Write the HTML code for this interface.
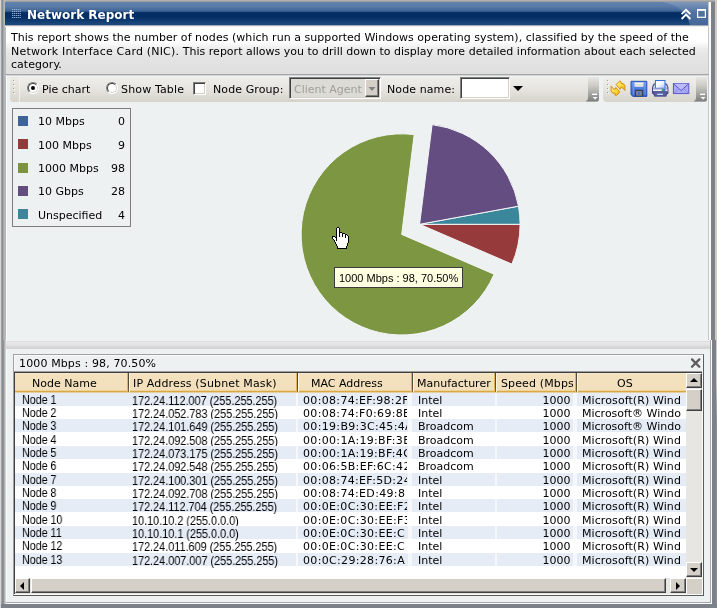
<!DOCTYPE html>
<html>
<head>
<meta charset="utf-8">
<title>Network Report</title>
<style>
html,body{margin:0;padding:0;}
body{width:717px;height:608px;overflow:hidden;position:relative;background:#eef1f2;font-family:"DejaVu Sans","Liberation Sans",sans-serif;font-size:11px;color:#000;}
.abs{position:absolute;}
.v,.a,#titletxt{will-change:transform;}
.v{font-family:"DejaVu Sans","Liberation Sans",sans-serif;font-size:11px;white-space:nowrap;line-height:13px;}
#d1,#d2,#d3{letter-spacing:0.04px;}
.a{font-family:"Liberation Sans",sans-serif;font-size:11px;white-space:nowrap;line-height:13px;}
/* window frame */
#fl0{left:0;top:0;width:1px;height:608px;background:#d6d6d6;}
#fl1{left:1px;top:0;width:3px;height:608px;background:linear-gradient(90deg,#9da0a5 0,#9da0a5 33.3%,#898e94 33.3%,#898e94 66.6%,#a6a8ab 66.6%);}
#fl2{left:4px;top:0;width:2px;height:608px;background:#b8b8b8;}
#fl3{left:6px;top:76px;width:1px;height:526px;background:#fbfbfb;}
#fl4{left:3px;top:340px;width:3px;height:268px;background:linear-gradient(90deg,#8e9398 0,#8e9398 33.3%,#b2b2b2 33.3%,#b2b2b2 66.6%,#cfcfcf 66.6%);}
#ft{left:0;top:0;width:717px;height:2px;background:linear-gradient(#b0b0b0 0,#b0b0b0 50%,#9c9c9c 50%);}
#fr0{left:708px;top:2px;width:1px;height:338px;background:#c6c6c6;}
#fr1{left:709px;top:2px;width:2px;height:338px;background:#fbfaf8;}
#fr2{left:711px;top:2px;width:4px;height:606px;background:#7d828a;}
#fr3{left:715px;top:0;width:2px;height:608px;background:linear-gradient(#cfccc5 0,#cfccc5 380px,#8d9197 420px);}
#fr4{left:710px;top:340px;width:6px;height:268px;background:linear-gradient(90deg,#a9a9a9 0,#a9a9a9 16.6%,#fcfcfc 16.6%,#fcfcfc 33.3%,#7d828a 33.3%);}
#fb0{left:6px;top:602px;width:705px;height:2px;background:linear-gradient(#a6a6a6 0,#a6a6a6 50%,#fcfcfc 50%);}
#fb1{left:1px;top:604px;width:716px;height:4px;background:#7d828a;}
/* title */
#title{left:5px;top:2px;width:703px;height:23px;background:linear-gradient(#6182ac 0%,#5b7ca8 18%,#3e6495 40%,#0a3468 45%,#012e63 50%,#052f65 66%,#1f4b7f 100%);}
#titletxt{left:27px;top:8px;color:#fff;font-weight:bold;font-size:12px;line-height:14px;white-space:nowrap;font-family:"DejaVu Sans","Liberation Sans",sans-serif;}
#desc{left:6px;top:26px;width:702px;height:48px;background:linear-gradient(#ffffff 0%,#fefefe 33%,#ececec 48%,#e5e5e5 60%,#dedede 100%);}
#descline{left:5px;top:74px;width:704px;height:2px;background:linear-gradient(#a6a6a6 0,#a6a6a6 50%,#d5d6d7 50%,#d5d6d7 100%);}
#descline2{left:5px;top:25px;width:704px;height:2px;background:linear-gradient(#a4acb6 0,#a4acb6 50%,#eceeef 50%);z-index:1;}
/* toolbar */
.tb{top:77px;height:25px;background:linear-gradient(#efeeea 0%,#e6e4df 50%,#d6d3cb 100%);border-radius:0 0 4px 4px;}
.ovf{top:77px;height:25px;background:linear-gradient(#e0dfda 0%,#c4c2bc 50%,#9a9a98 100%);border-radius:0 0 5px 0;}
.grip{width:1px;height:16px;top:80px;background:repeating-linear-gradient(#a19e97 0,#a19e97 1.5px,transparent 1.5px,transparent 4px);}
.grip:after{content:"";position:absolute;left:1px;top:1px;width:1px;height:16px;background:repeating-linear-gradient(#ffffff 0,#ffffff 1.5px,transparent 1.5px,transparent 4px);}
.gseg{top:77px;height:25px;width:9px;background:linear-gradient(#ebe9e4 0%,#e4e1db 50%,#d7d4cc 100%);border-radius:0 0 0 4px;box-shadow:1px 0 0 #f1f0ec;}
.radio{width:12px;height:12px;border-radius:50%;background:#fff;border:1px solid;border-color:#808080 #ffffff #ffffff #808080;box-sizing:border-box;transform:rotate(0deg);}
.radio:after{content:"";position:absolute;left:0;top:0;width:10px;height:10px;box-sizing:border-box;border-radius:50%;border:1px solid;border-color:#404040 #d4d0c8 #d4d0c8 #404040;}
.sunk{box-sizing:border-box;border:1px solid;border-color:#808080 #fff #fff #808080;box-shadow:inset 1px 1px 0 #404040, inset -1px -1px 0 #d4d0c8;}
/* legend */
#legend{left:12px;top:108px;width:119px;height:119px;box-sizing:border-box;border:1px solid #7d7d7d;}
.sw{left:18px;width:10px;height:10px;}
.ll{left:38px;}
.ln{left:90px;width:35px;text-align:right;}
/* splitter */
#split0{left:6px;top:341px;width:704px;height:1px;background:#dedede;}
#split1{left:6px;top:342px;width:704px;height:7px;background:linear-gradient(#e8e8e8 0%,#e2e2e2 45%,#d3d3d3 80%,#d6d6d6 100%);}
/* lower panel */
#lbox{left:13px;top:354px;width:691px;height:242px;box-sizing:border-box;border:1px solid;border-color:#a0a0a0 #5c5c5c #5c5c5c #a0a0a0;box-shadow:inset 1px 1px 0 #fafafa, inset -1px -1px 0 #fafafa;}
#tframe{left:14px;top:372px;width:688px;height:222px;background:#fff;border-top:1px solid #404040;border-left:1px solid #404040;box-sizing:border-box;box-shadow:0 -1px 0 #9c9c9c;}
#thead{left:15px;top:373px;width:671px;height:17px;background:linear-gradient(#f7e9cf 0,#f3e0bd 2px,#f2dfbb 100%);}
#theadline{left:15px;top:390px;width:671px;height:3px;background:linear-gradient(#ecd29c 0,#ecd29c 33.3%,#dba73f 33.3%,#dba73f 66.6%,#e6cf9e 66.6%);}
.sep{top:373px;width:1px;height:19px;background:linear-gradient(#4c463a,#5e4f33 75%,#8a6a30);box-shadow:1px 0 0 #fdf6e6,-1px 0 0 #dfb25c;}
.stripe{left:15px;width:671px;height:13px;background:#e6ecf6;}
.btn{box-sizing:border-box;background:#d4d0c8;border:1px solid;border-color:#fff #404040 #404040 #fff;box-shadow:inset -1px -1px 0 #808080;}
.track{background:#e8e6e1;}
</style>
</head>
<body>
<!-- frame -->
<div class="abs" id="ft"></div>
<div class="abs" id="fl0"></div><div class="abs" id="fl1"></div><div class="abs" id="fl2"></div><div class="abs" id="fl3"></div><div class="abs" id="fl4"></div>
<div class="abs" id="fr0"></div><div class="abs" id="fr1"></div><div class="abs" id="fr2"></div><div class="abs" id="fr3"></div><div class="abs" id="fr4"></div>
<div class="abs" id="fb0"></div><div class="abs" id="fb1"></div>

<!-- title bar -->
<div class="abs" id="title"></div>
<svg class="abs" style="left:12px;top:9px" width="9" height="9" viewBox="0 0 9 9"><g fill="#93abce"><rect x="0.00" y="0" width="1.25" height="1"/><rect x="1.90" y="0" width="1.25" height="1"/><rect x="3.80" y="0" width="1.25" height="1"/><rect x="5.70" y="0" width="1.25" height="1"/><rect x="7.60" y="0" width="1.25" height="1"/><rect x="0.00" y="2" width="1.25" height="1"/><rect x="1.90" y="2" width="1.25" height="1"/><rect x="3.80" y="2" width="1.25" height="1"/><rect x="5.70" y="2" width="1.25" height="1"/><rect x="7.60" y="2" width="1.25" height="1"/><rect x="0.00" y="4" width="1.25" height="1"/><rect x="1.90" y="4" width="1.25" height="1"/><rect x="3.80" y="4" width="1.25" height="1"/><rect x="5.70" y="4" width="1.25" height="1"/><rect x="7.60" y="4" width="1.25" height="1"/><rect x="0.00" y="6" width="1.25" height="1"/><rect x="1.90" y="6" width="1.25" height="1"/><rect x="3.80" y="6" width="1.25" height="1"/><rect x="5.70" y="6" width="1.25" height="1"/><rect x="7.60" y="6" width="1.25" height="1"/><rect x="0.00" y="8" width="1.25" height="1"/><rect x="1.90" y="8" width="1.25" height="1"/><rect x="3.80" y="8" width="1.25" height="1"/><rect x="5.70" y="8" width="1.25" height="1"/><rect x="7.60" y="8" width="1.25" height="1"/></g></svg>
<div class="abs" id="titletxt">Network Report</div>
<svg class="abs" style="left:655px;top:2px" width="53" height="23" viewBox="655 2 53 23">
 <defs><linearGradient id="gt" x1="0" y1="0" x2="0" y2="1"><stop offset="0" stop-color="#7f98bc"/><stop offset="0.45" stop-color="#52739f"/><stop offset="1" stop-color="#446799"/></linearGradient></defs>
 <path d="M662 2 C678 4 687 13 690 25 L708 25 L708 2 Z" fill="url(#gt)"/>
</svg>
<svg class="abs" style="left:679px;top:8px" width="29" height="14" viewBox="0 0 29 14">
 <path d="M2.6 6.2 L7 1.8 L11.4 6.2 M2.6 11 L7 6.6 L11.4 11" fill="none" stroke="#fff" stroke-width="1.9"/>
 <rect x="18.6" y="2" width="7.8" height="7.3" fill="none" stroke="#fff" stroke-width="1.2"/>
 <rect x="18" y="1" width="9" height="1.6" fill="#fff"/>
</svg>

<!-- description -->
<div class="abs" id="descline2"></div>
<div class="abs" id="desc"></div>
<div class="abs" id="descline"></div>
<div class="abs v" id="d1" style="left:11px;top:31px;">This report shows the number of nodes (which run a supported Windows operating system), classified by the speed of the</div>
<div class="abs v" id="d2" style="left:11px;top:45px;"><span id="d2a" style="letter-spacing:0.19px;">Network Interface Card (NIC). </span><span id="d2b" style="letter-spacing:0.005px;">This report allows you to drill down to display more detailed information about each selected</span></div>
<div class="abs v" id="d3" style="left:11px;top:58px;">category.</div>

<!-- toolbar 1 -->
<div class="abs tb" style="left:10px;width:589px;"></div>
<svg class="abs" style="left:0;top:0" width="0" height="0"><defs><linearGradient id="go" x1="0" y1="0" x2="0" y2="1"><stop offset="0" stop-color="#ebe9e5"/><stop offset="0.08" stop-color="#e2e0db"/><stop offset="0.35" stop-color="#cdcbc6"/><stop offset="0.65" stop-color="#a9a9a7"/><stop offset="1" stop-color="#7c7c7c"/></linearGradient></defs></svg>
<svg class="abs" style="left:585px;top:77px" width="15" height="25" viewBox="0 0 15 25">
 <path d="M3 0 L14 0 L14 22 Q14 24.6 11.5 24.6 L0.6 24.6 Q3 23.6 3 21 Z" fill="url(#go)"/>
 <rect x="7" y="16.6" width="5" height="1.4" fill="#fff"/>
 <path d="M7.6 20 L12.6 20 L10.1 22.8 Z" fill="#f4f4f4"/>
</svg>
<div class="abs gseg" style="left:10px;"></div><div class="abs grip" style="left:13px;"></div>
<div class="abs radio" style="left:27px;top:82px;"></div>
<div class="abs" style="left:31px;top:86px;width:4px;height:4px;border-radius:50%;background:#000;"></div>
<div class="abs v" id="t1" style="left:42px;top:83px;">Pie chart</div>
<div class="abs radio" style="left:106px;top:82px;"></div>
<div class="abs v" id="t2" style="left:120.5px;top:83px;letter-spacing:0.15px;">Show Table</div>
<div class="abs sunk" style="left:193px;top:82px;width:13px;height:13px;background:#fff;"></div>
<div class="abs v" id="t3" style="left:212.5px;top:83px;letter-spacing:0.1px;">Node Group:</div>
<div class="abs sunk" style="left:289px;top:77px;width:92px;height:22px;background:#dddbd5;"></div>
<div class="abs v" id="t4" style="left:294px;top:83px;color:#a09e98;">Client Agent</div>
<div class="abs btn" style="left:365px;top:79px;width:14px;height:18px;"></div>
<svg class="abs" style="left:368px;top:87px" width="8" height="4" viewBox="0 0 8 4"><path d="M0.5 0 L7.5 0 L4 4 Z" fill="#808080"/></svg>
<div class="abs v" id="t5" style="left:387px;top:83px;letter-spacing:0.1px;">Node name:</div>
<div class="abs sunk" style="left:460px;top:77px;width:50px;height:22px;background:#fff;"></div>
<svg class="abs" style="left:513px;top:86px" width="10" height="5" viewBox="0 0 10 5"><path d="M0 0 L10 0 L5 5 Z" fill="#000"/></svg>

<!-- toolbar 2 -->
<div class="abs tb" style="left:603px;width:104px;border-radius:4px 0 4px 4px;"></div>
<svg class="abs" style="left:693px;top:77px" width="15" height="25" viewBox="0 0 15 25">
 <path d="M3 0 L14 0 L14 22 Q14 24.6 11.5 24.6 L0.6 24.6 Q3 23.6 3 21 Z" fill="url(#go)"/>
 <rect x="7" y="16.6" width="5" height="1.4" fill="#fff"/>
 <path d="M7.6 20 L12.6 20 L10.1 22.8 Z" fill="#f4f4f4"/>
</svg>
<div class="abs grip" style="left:607px;"></div>
<svg class="abs" style="left:609px;top:79px" width="18" height="20" viewBox="609 79 18 20">
 <defs><linearGradient id="gy" x1="0" y1="0" x2="1" y2="1"><stop offset="0" stop-color="#fff6b0"/><stop offset="0.5" stop-color="#ffd83a"/><stop offset="1" stop-color="#e9ac12"/></linearGradient></defs>
 <path d="M616.1 84.7 L619.5 81.1 L620.9 81.4 L621.1 83.4 L623.3 83.5 L624.9 85.6 L624.9 90.5 L622.6 87.8 L620.8 87.4 L620.2 89.2 Z" fill="url(#gy)" stroke="#cf9410" stroke-width="1" stroke-linejoin="round"/>
 <path d="M619.9 91.9 L616.5 95.5 L615.1 95.2 L614.9 93.2 L612.7 93.1 L611.1 91.0 L611.1 86.1 L613.4 88.8 L615.2 89.2 L615.8 87.4 Z" fill="url(#gy)" stroke="#cf9410" stroke-width="1" stroke-linejoin="round"/>
</svg>
<svg class="abs" style="left:630px;top:80px" width="18" height="18" viewBox="630 80 18 18">
 <defs><linearGradient id="gb" x1="0" y1="0" x2="0" y2="1"><stop offset="0" stop-color="#6f9bf0"/><stop offset="1" stop-color="#2f5fc8"/></linearGradient></defs>
 <path d="M631 81.3 L646.8 81.3 L646.8 96.4 L633 96.4 L631 94.6 Z" fill="url(#gb)" stroke="#2a50b4" stroke-width="1"/>
 <rect x="634.8" y="82.6" width="8.4" height="4" fill="#f6f6f6" stroke="#c8d4ec" stroke-width="0.6"/>
 <rect x="634.8" y="84.3" width="8.4" height="1.1" fill="#cfcfcf"/>
 <rect x="632.8" y="82" width="1" height="13" fill="#7fa6f2" opacity="0.7"/>
 <rect x="644.6" y="82" width="1" height="13" fill="#7fa6f2" opacity="0.7"/>
 <rect x="635.2" y="89.8" width="7.6" height="6.6" fill="#3a3a3a"/>
 <rect x="636.2" y="91" width="5.6" height="4.6" fill="#8c8c8c"/>
 <rect x="637.8" y="91.8" width="2.6" height="3" fill="#3f6fd8"/>
</svg>
<svg class="abs" style="left:651px;top:79px" width="19" height="19" viewBox="651 79 19 19">
 <defs><linearGradient id="gp" x1="0" y1="0" x2="1" y2="1"><stop offset="0" stop-color="#ffffff"/><stop offset="0.5" stop-color="#f2f7ff"/><stop offset="1" stop-color="#a4c2f4"/></linearGradient></defs>
 <path d="M655.2 83.8 L653.6 84.6 L652.5 87.6 L652.5 93 L654 94.4 L666.4 94.4 L667.9 93 L667.9 87.6 L666.8 84.6 L665.2 83.8 Z" fill="#c9cbe8" stroke="#474b86" stroke-width="1.1" stroke-linejoin="round"/>
 <rect x="655.4" y="80.5" width="9.6" height="7.8" fill="url(#gp)" stroke="#3f6fd6" stroke-width="1"/>
 <rect x="653.1" y="88.3" width="14.2" height="1.4" fill="#9a9ccc"/>
 <rect x="653.1" y="89.6" width="14.2" height="2" fill="#f3f3fb"/>
 <rect x="661.8" y="88.8" width="2.2" height="2.2" fill="#2ab24c"/>
 <rect x="663.8" y="89" width="1.6" height="1.8" fill="#2a62cc"/>
 <path d="M653.1 91.6 L667.3 91.6 L667.3 93 L666.2 94.2 L666.2 96.2 L654.4 96.2 L654.4 94.2 L653.1 93 Z" fill="#5b5f9e" stroke="#3f4380" stroke-width="0.8" stroke-linejoin="round"/>
 <rect x="657.2" y="93.7" width="5.8" height="1.3" fill="#c4d8fa"/>
</svg>
<svg class="abs" style="left:672px;top:82px" width="18" height="13" viewBox="672 82 18 13">
 <rect x="673.4" y="83.6" width="15.4" height="10" fill="#a9a9f6" stroke="#5a58c4" stroke-width="1"/>
 <path d="M673.6 83.8 L681.1 90.6 L688.6 83.8" fill="#bcbcfb" stroke="#5a58c4" stroke-width="1"/>
 <path d="M673.8 93.4 L678.6 88.6 M688.4 93.4 L683.6 88.6" stroke="#8482e0" stroke-width="0.8" fill="none"/>
</svg>

<!-- legend -->
<div class="abs" id="legend"></div>
<div class="abs sw" style="top:116px;background:#3d6399;"></div>
<div class="abs sw" style="top:139px;background:#943b3c;"></div>
<div class="abs sw" style="top:163px;background:#7c9441;"></div>
<div class="abs sw" style="top:186px;background:#644e80;"></div>
<div class="abs sw" style="top:209px;background:#3b869c;"></div>
<div class="abs v ll" style="top:115px;">10 Mbps</div><div class="abs v ln" style="top:115px;">0</div>
<div class="abs v ll" style="top:139px;">100 Mbps</div><div class="abs v ln" style="top:139px;">9</div>
<div class="abs v ll" style="top:162px;">1000 Mbps</div><div class="abs v ln" style="top:162px;">98</div>
<div class="abs v ll" style="top:185px;">10 Gbps</div><div class="abs v ln" style="top:185px;">28</div>
<div class="abs v ll" style="top:209px;">Unspecified</div><div class="abs v ln" style="top:209px;">4</div>

<!-- pie -->
<svg class="abs" id="pie" style="left:290px;top:110px" width="240" height="235" viewBox="290 110 240 235">
<path d="M419.6 224.3 L511.9 264.1 A100.5 100.5 0 0 0 520.1 224.3 Z" fill="#963a3c" stroke="#f4f6f7" stroke-width="1" stroke-linejoin="round"/>
<path d="M419.6 224.3 L520.1 224.3 A100.5 100.5 0 0 0 518.5 206.2 Z" fill="#3a879c" stroke="#f4f6f7" stroke-width="1" stroke-linejoin="round"/>
<path d="M419.6 224.3 L518.5 206.2 A100.5 100.5 0 0 0 432.1 124.6 Z" fill="#644d80" stroke="#f4f6f7" stroke-width="1" stroke-linejoin="round"/>
<path d="M401.7 234.4 L414.2 134.6 A100.6 100.6 0 1 0 494.1 274.2 Z" fill="#7c9642" stroke="#f4f6f7" stroke-width="1" stroke-linejoin="round"/>
</svg>
<svg class="abs" style="left:332px;top:227px" width="17" height="22" viewBox="0 0 17 22" shape-rendering="crispEdges"><rect x="5" y="0" width="2" height="1" fill="#000"/><rect x="4" y="1" width="1" height="1" fill="#000"/><rect x="5" y="1" width="2" height="1" fill="#fff"/><rect x="7" y="1" width="1" height="1" fill="#000"/><rect x="4" y="2" width="1" height="1" fill="#000"/><rect x="5" y="2" width="2" height="1" fill="#fff"/><rect x="7" y="2" width="1" height="1" fill="#000"/><rect x="4" y="3" width="1" height="1" fill="#000"/><rect x="5" y="3" width="2" height="1" fill="#fff"/><rect x="7" y="3" width="1" height="1" fill="#000"/><rect x="4" y="4" width="1" height="1" fill="#000"/><rect x="5" y="4" width="2" height="1" fill="#fff"/><rect x="7" y="4" width="1" height="1" fill="#000"/><rect x="4" y="5" width="1" height="1" fill="#000"/><rect x="5" y="5" width="2" height="1" fill="#fff"/><rect x="7" y="5" width="3" height="1" fill="#000"/><rect x="4" y="6" width="1" height="1" fill="#000"/><rect x="5" y="6" width="2" height="1" fill="#fff"/><rect x="7" y="6" width="1" height="1" fill="#000"/><rect x="8" y="6" width="2" height="1" fill="#fff"/><rect x="10" y="6" width="3" height="1" fill="#000"/><rect x="4" y="7" width="1" height="1" fill="#000"/><rect x="5" y="7" width="2" height="1" fill="#fff"/><rect x="7" y="7" width="1" height="1" fill="#000"/><rect x="8" y="7" width="2" height="1" fill="#fff"/><rect x="10" y="7" width="1" height="1" fill="#000"/><rect x="11" y="7" width="2" height="1" fill="#fff"/><rect x="13" y="7" width="2" height="1" fill="#000"/><rect x="4" y="8" width="1" height="1" fill="#000"/><rect x="5" y="8" width="2" height="1" fill="#fff"/><rect x="7" y="8" width="1" height="1" fill="#000"/><rect x="8" y="8" width="2" height="1" fill="#fff"/><rect x="10" y="8" width="1" height="1" fill="#000"/><rect x="11" y="8" width="2" height="1" fill="#fff"/><rect x="13" y="8" width="1" height="1" fill="#000"/><rect x="14" y="8" width="1" height="1" fill="#fff"/><rect x="15" y="8" width="1" height="1" fill="#000"/><rect x="0" y="9" width="3" height="1" fill="#000"/><rect x="4" y="9" width="1" height="1" fill="#000"/><rect x="5" y="9" width="2" height="1" fill="#fff"/><rect x="7" y="9" width="1" height="1" fill="#000"/><rect x="8" y="9" width="2" height="1" fill="#fff"/><rect x="10" y="9" width="1" height="1" fill="#000"/><rect x="11" y="9" width="2" height="1" fill="#fff"/><rect x="13" y="9" width="1" height="1" fill="#000"/><rect x="14" y="9" width="2" height="1" fill="#fff"/><rect x="16" y="9" width="1" height="1" fill="#000"/><rect x="0" y="10" width="1" height="1" fill="#000"/><rect x="1" y="10" width="2" height="1" fill="#fff"/><rect x="3" y="10" width="2" height="1" fill="#000"/><rect x="5" y="10" width="8" height="1" fill="#fff"/><rect x="13" y="10" width="1" height="1" fill="#000"/><rect x="14" y="10" width="2" height="1" fill="#fff"/><rect x="16" y="10" width="1" height="1" fill="#000"/><rect x="0" y="11" width="1" height="1" fill="#000"/><rect x="1" y="11" width="3" height="1" fill="#fff"/><rect x="4" y="11" width="1" height="1" fill="#000"/><rect x="5" y="11" width="11" height="1" fill="#fff"/><rect x="16" y="11" width="1" height="1" fill="#000"/><rect x="1" y="12" width="1" height="1" fill="#000"/><rect x="2" y="12" width="2" height="1" fill="#fff"/><rect x="4" y="12" width="1" height="1" fill="#000"/><rect x="5" y="12" width="11" height="1" fill="#fff"/><rect x="16" y="12" width="1" height="1" fill="#000"/><rect x="2" y="13" width="1" height="1" fill="#000"/><rect x="3" y="13" width="1" height="1" fill="#fff"/><rect x="4" y="13" width="1" height="1" fill="#000"/><rect x="5" y="13" width="11" height="1" fill="#fff"/><rect x="16" y="13" width="1" height="1" fill="#000"/><rect x="2" y="14" width="1" height="1" fill="#000"/><rect x="3" y="14" width="13" height="1" fill="#fff"/><rect x="16" y="14" width="1" height="1" fill="#000"/><rect x="3" y="15" width="1" height="1" fill="#000"/><rect x="4" y="15" width="12" height="1" fill="#fff"/><rect x="16" y="15" width="1" height="1" fill="#000"/><rect x="3" y="16" width="1" height="1" fill="#000"/><rect x="4" y="16" width="11" height="1" fill="#fff"/><rect x="15" y="16" width="1" height="1" fill="#000"/><rect x="4" y="17" width="1" height="1" fill="#000"/><rect x="5" y="17" width="10" height="1" fill="#fff"/><rect x="15" y="17" width="1" height="1" fill="#000"/><rect x="4" y="18" width="1" height="1" fill="#000"/><rect x="5" y="18" width="10" height="1" fill="#fff"/><rect x="15" y="18" width="1" height="1" fill="#000"/><rect x="5" y="19" width="1" height="1" fill="#000"/><rect x="6" y="19" width="8" height="1" fill="#fff"/><rect x="14" y="19" width="1" height="1" fill="#000"/><rect x="5" y="20" width="1" height="1" fill="#000"/><rect x="6" y="20" width="8" height="1" fill="#fff"/><rect x="14" y="20" width="1" height="1" fill="#000"/><rect x="5" y="21" width="10" height="1" fill="#000"/></svg>

<!-- tooltip -->
<div class="abs" style="left:334px;top:267px;width:129px;height:21px;box-sizing:border-box;border:1px solid #3c3c3c;background:#ffffe1;"></div>
<div class="abs a" id="tip" style="left:339px;top:272px;">1000 Mbps : 98, 70.50%</div>

<!-- splitter -->
<div class="abs" id="split0"></div><div class="abs" id="split1"></div>

<!-- lower box -->
<div class="abs" id="lbox"></div>
<div class="abs v" id="cap" style="left:19px;top:357px;letter-spacing:0.13px;">1000 Mbps : 98, 70.50%</div>
<svg class="abs" style="left:690px;top:357px" width="12" height="12" viewBox="690 357 12 12"><path d="M692 359.4 L699.3 366.7 M699.3 359.4 L692 366.7" stroke="#5c5c5c" stroke-width="2.3" stroke-linecap="round" fill="none"/></svg>
<div class="abs" id="tframe"></div>
<div class="abs" id="thead"></div>
<div class="abs" id="theadline"></div>
<div class="abs sep" style="left:128px;"></div><div class="abs sep" style="left:297px;"></div><div class="abs sep" style="left:412px;"></div><div class="abs sep" style="left:495px;"></div><div class="abs sep" style="left:576px;"></div>
<div class="abs v" id="h1" style="left:32px;top:377px;">Node Name</div>
<div class="abs v" id="h2" style="left:133.3px;top:377px;letter-spacing:0.15px;">IP Address (Subnet Mask)</div>
<div class="abs v" id="h3" style="left:311.3px;top:377px;">MAC Address</div>
<div class="abs v" id="h4" style="left:417.2px;top:377px;">Manufacturer</div>
<div class="abs v" id="h6" style="left:616.5px;top:377px;">OS</div>
<div class="abs v" id="h5" style="letter-spacing:0.13px;left:501px;top:377px;width:71.5px;overflow:hidden;">Speed (Mbps)</div>
<div class="abs stripe" style="top:393px;"></div>
<div class="abs a nd" style="font-size:12.5px;transform:scaleX(0.855);transform-origin:0 0;left:21.6px;top:394px;">Node 1</div>
<div class="abs a ip" style="font-size:12.5px;transform:scaleX(0.868);transform-origin:0 0;left:132px;top:395px;">172.24.112.007 (255.255.255)</div>
<div class="abs v mac" style="letter-spacing:0.33px;left:302.5px;top:394px;width:104px;overflow:hidden;">00:08:74:EF:98:2F</div>
<div class="abs v" style="left:418px;top:394px;">Intel</div>
<div class="abs v" style="left:520px;width:50.5px;text-align:right;top:394px;">1000</div>
<div class="abs v os" style="letter-spacing:0.09px;left:581.5px;top:394px;width:99px;overflow:hidden;">Microsoft(R) Windows</div>
<div class="abs a nd" style="font-size:12.5px;transform:scaleX(0.855);transform-origin:0 0;left:21.6px;top:407px;">Node 2</div>
<div class="abs a ip" style="font-size:12.5px;transform:scaleX(0.868);transform-origin:0 0;left:132px;top:408px;">172.24.052.783 (255.255.255)</div>
<div class="abs v mac" style="letter-spacing:0.33px;left:302.5px;top:407px;width:104px;overflow:hidden;">00:08:74:F0:69:8E</div>
<div class="abs v" style="left:418px;top:407px;">Intel</div>
<div class="abs v" style="left:520px;width:50.5px;text-align:right;top:407px;">1000</div>
<div class="abs v os" style="left:581.5px;top:407px;width:99px;overflow:hidden;">Microsoft® Windows</div>
<div class="abs stripe" style="top:419px;"></div>
<div class="abs a nd" style="font-size:12.5px;transform:scaleX(0.855);transform-origin:0 0;left:21.6px;top:420px;">Node 3</div>
<div class="abs a ip" style="font-size:12.5px;transform:scaleX(0.868);transform-origin:0 0;left:132px;top:421px;">172.24.101.649 (255.255.255)</div>
<div class="abs v mac" style="letter-spacing:0.33px;left:302.5px;top:420px;width:104px;overflow:hidden;">00:19:B9:3C:45:4A</div>
<div class="abs v" style="left:418px;top:420px;">Broadcom</div>
<div class="abs v" style="left:520px;width:50.5px;text-align:right;top:420px;">1000</div>
<div class="abs v os" style="left:581.5px;top:420px;width:99px;overflow:hidden;">Microsoft® Windows</div>
<div class="abs a nd" style="font-size:12.5px;transform:scaleX(0.855);transform-origin:0 0;left:21.6px;top:434px;">Node 4</div>
<div class="abs a ip" style="font-size:12.5px;transform:scaleX(0.868);transform-origin:0 0;left:132px;top:435px;">172.24.092.508 (255.255.255)</div>
<div class="abs v mac" style="letter-spacing:0.33px;left:302.5px;top:434px;width:104px;overflow:hidden;">00:00:1A:19:BF:3E</div>
<div class="abs v" style="left:418px;top:434px;">Broadcom</div>
<div class="abs v" style="left:520px;width:50.5px;text-align:right;top:434px;">1000</div>
<div class="abs v os" style="letter-spacing:0.09px;left:581.5px;top:434px;width:99px;overflow:hidden;">Microsoft(R) Windows</div>
<div class="abs stripe" style="top:446px;"></div>
<div class="abs a nd" style="font-size:12.5px;transform:scaleX(0.855);transform-origin:0 0;left:21.6px;top:447px;">Node 5</div>
<div class="abs a ip" style="font-size:12.5px;transform:scaleX(0.868);transform-origin:0 0;left:132px;top:448px;">172.24.073.175 (255.255.255)</div>
<div class="abs v mac" style="letter-spacing:0.33px;left:302.5px;top:447px;width:104px;overflow:hidden;">00:00:1A:19:BF:4C</div>
<div class="abs v" style="left:418px;top:447px;">Broadcom</div>
<div class="abs v" style="left:520px;width:50.5px;text-align:right;top:447px;">1000</div>
<div class="abs v os" style="letter-spacing:0.09px;left:581.5px;top:447px;width:99px;overflow:hidden;">Microsoft(R) Windows</div>
<div class="abs a nd" style="font-size:12.5px;transform:scaleX(0.855);transform-origin:0 0;left:21.6px;top:460px;">Node 6</div>
<div class="abs a ip" style="font-size:12.5px;transform:scaleX(0.868);transform-origin:0 0;left:132px;top:461px;">172.24.092.548 (255.255.255)</div>
<div class="abs v mac" style="letter-spacing:0.33px;left:302.5px;top:460px;width:104px;overflow:hidden;">00:06:5B:EF:6C:42</div>
<div class="abs v" style="left:418px;top:460px;">Broadcom</div>
<div class="abs v" style="left:520px;width:50.5px;text-align:right;top:460px;">1000</div>
<div class="abs v os" style="letter-spacing:0.09px;left:581.5px;top:460px;width:99px;overflow:hidden;">Microsoft(R) Windows</div>
<div class="abs stripe" style="top:473px;"></div>
<div class="abs a nd" style="font-size:12.5px;transform:scaleX(0.855);transform-origin:0 0;left:21.6px;top:474px;">Node 7</div>
<div class="abs a ip" style="font-size:12.5px;transform:scaleX(0.868);transform-origin:0 0;left:132px;top:475px;">172.24.100.301 (255.255.255)</div>
<div class="abs v mac" style="letter-spacing:0.33px;left:302.5px;top:474px;width:104px;overflow:hidden;">00:08:74:EF:5D:24</div>
<div class="abs v" style="left:418px;top:474px;">Intel</div>
<div class="abs v" style="left:520px;width:50.5px;text-align:right;top:474px;">1000</div>
<div class="abs v os" style="letter-spacing:0.09px;left:581.5px;top:474px;width:99px;overflow:hidden;">Microsoft(R) Windows</div>
<div class="abs a nd" style="font-size:12.5px;transform:scaleX(0.855);transform-origin:0 0;left:21.6px;top:487px;">Node 8</div>
<div class="abs a ip" style="font-size:12.5px;transform:scaleX(0.868);transform-origin:0 0;left:132px;top:488px;">172.24.092.708 (255.255.255)</div>
<div class="abs v mac" style="letter-spacing:0.33px;left:302.5px;top:487px;width:104px;overflow:hidden;">00:08:74:ED:49:8</div>
<div class="abs v" style="left:418px;top:487px;">Intel</div>
<div class="abs v" style="left:520px;width:50.5px;text-align:right;top:487px;">1000</div>
<div class="abs v os" style="letter-spacing:0.09px;left:581.5px;top:487px;width:99px;overflow:hidden;">Microsoft(R) Windows</div>
<div class="abs stripe" style="top:499px;"></div>
<div class="abs a nd" style="font-size:12.5px;transform:scaleX(0.855);transform-origin:0 0;left:21.6px;top:500px;">Node 9</div>
<div class="abs a ip" style="font-size:12.5px;transform:scaleX(0.868);transform-origin:0 0;left:132px;top:501px;">172.24.112.704 (255.255.255)</div>
<div class="abs v mac" style="letter-spacing:0.33px;left:302.5px;top:500px;width:104px;overflow:hidden;">00:0E:0C:30:EE:F2</div>
<div class="abs v" style="left:418px;top:500px;">Intel</div>
<div class="abs v" style="left:520px;width:50.5px;text-align:right;top:500px;">1000</div>
<div class="abs v os" style="letter-spacing:0.09px;left:581.5px;top:500px;width:99px;overflow:hidden;">Microsoft(R) Windows</div>
<div class="abs a nd" style="font-size:12.5px;transform:scaleX(0.855);transform-origin:0 0;left:21.6px;top:514px;">Node 10</div>
<div class="abs a ip" style="font-size:12.5px;transform:scaleX(0.868);transform-origin:0 0;left:132px;top:515px;">10.10.10.2 (255.0.0.0)</div>
<div class="abs v mac" style="letter-spacing:0.33px;left:302.5px;top:514px;width:104px;overflow:hidden;">00:0E:0C:30:EE:F3</div>
<div class="abs v" style="left:418px;top:514px;">Intel</div>
<div class="abs v" style="left:520px;width:50.5px;text-align:right;top:514px;">1000</div>
<div class="abs v os" style="letter-spacing:0.09px;left:581.5px;top:514px;width:99px;overflow:hidden;">Microsoft(R) Windows</div>
<div class="abs stripe" style="top:526px;"></div>
<div class="abs a nd" style="font-size:12.5px;transform:scaleX(0.855);transform-origin:0 0;left:21.6px;top:527px;">Node 11</div>
<div class="abs a ip" style="font-size:12.5px;transform:scaleX(0.868);transform-origin:0 0;left:132px;top:528px;">10.10.10.1 (255.0.0.0)</div>
<div class="abs v mac" style="letter-spacing:0.33px;left:302.5px;top:527px;width:104px;overflow:hidden;">00:0E:0C:30:EE:C</div>
<div class="abs v" style="left:418px;top:527px;">Intel</div>
<div class="abs v" style="left:520px;width:50.5px;text-align:right;top:527px;">1000</div>
<div class="abs v os" style="letter-spacing:0.09px;left:581.5px;top:527px;width:99px;overflow:hidden;">Microsoft(R) Windows</div>
<div class="abs a nd" style="font-size:12.5px;transform:scaleX(0.855);transform-origin:0 0;left:21.6px;top:540px;">Node 12</div>
<div class="abs a ip" style="font-size:12.5px;transform:scaleX(0.868);transform-origin:0 0;left:132px;top:541px;">172.24.011.609 (255.255.255)</div>
<div class="abs v mac" style="letter-spacing:0.33px;left:302.5px;top:540px;width:104px;overflow:hidden;">00:0E:0C:30:EE:C</div>
<div class="abs v" style="left:418px;top:540px;">Intel</div>
<div class="abs v" style="left:520px;width:50.5px;text-align:right;top:540px;">1000</div>
<div class="abs v os" style="letter-spacing:0.09px;left:581.5px;top:540px;width:99px;overflow:hidden;">Microsoft(R) Windows</div>
<div class="abs stripe" style="top:553px;"></div>
<div class="abs a nd" style="font-size:12.5px;transform:scaleX(0.855);transform-origin:0 0;left:21.6px;top:554px;">Node 13</div>
<div class="abs a ip" style="font-size:12.5px;transform:scaleX(0.868);transform-origin:0 0;left:132px;top:555px;">172.24.007.007 (255.255.255)</div>
<div class="abs v mac" style="letter-spacing:0.33px;left:302.5px;top:554px;width:104px;overflow:hidden;">00:0C:29:28:76:A</div>
<div class="abs v" style="left:418px;top:554px;">Intel</div>
<div class="abs v" style="left:520px;width:50.5px;text-align:right;top:554px;">1000</div>
<div class="abs v os" style="letter-spacing:0.09px;left:581.5px;top:554px;width:99px;overflow:hidden;">Microsoft(R) Windows</div>
<div class="abs" style="left:296px;top:393px;width:2px;height:173px;background:rgba(255,255,255,0.6);"></div>
<div class="abs" style="left:408px;top:393px;width:4px;height:173px;background:rgba(255,255,255,0.6);"></div>
<div class="abs" style="left:495px;top:393px;width:2px;height:173px;background:rgba(255,255,255,0.6);"></div>
<div class="abs" style="left:573px;top:393px;width:4px;height:173px;background:rgba(255,255,255,0.6);"></div>
<div class="abs track" style="left:686px;top:373px;width:16px;height:205px;"></div>
<div class="abs btn" style="left:686px;top:373px;width:16px;height:15px;"></div>
<svg class="abs" style="left:690px;top:378px" width="8" height="4" viewBox="0 0 8 4"><path d="M0 4 L8 4 L4 0 Z" fill="#000"/></svg>
<div class="abs btn" style="left:686px;top:389px;width:16px;height:22px;"></div>
<div class="abs btn" style="left:686px;top:562px;width:16px;height:15px;"></div>
<svg class="abs" style="left:690px;top:568px" width="8" height="4" viewBox="0 0 8 4"><path d="M0 0 L8 0 L4 4 Z" fill="#000"/></svg>
<div class="abs track" style="left:15px;top:578px;width:671px;height:16px;"></div>
<div class="abs" style="left:687px;top:579px;width:15px;height:15px;background:#d4d0c8;"></div>
<div class="abs btn" style="left:15px;top:578px;width:15px;height:15px;"></div>
<svg class="abs" style="left:20px;top:582px" width="4" height="8" viewBox="0 0 4 8"><path d="M4 0 L4 8 L0 4 Z" fill="#000"/></svg>
<div class="abs btn" style="left:31px;top:578px;width:635px;height:15px;"></div>
<div class="abs btn" style="left:670px;top:578px;width:16px;height:15px;"></div>
<svg class="abs" style="left:676px;top:582px" width="4" height="8" viewBox="0 0 4 8"><path d="M0 0 L0 8 L4 4 Z" fill="#000"/></svg>
</body>
</html>
